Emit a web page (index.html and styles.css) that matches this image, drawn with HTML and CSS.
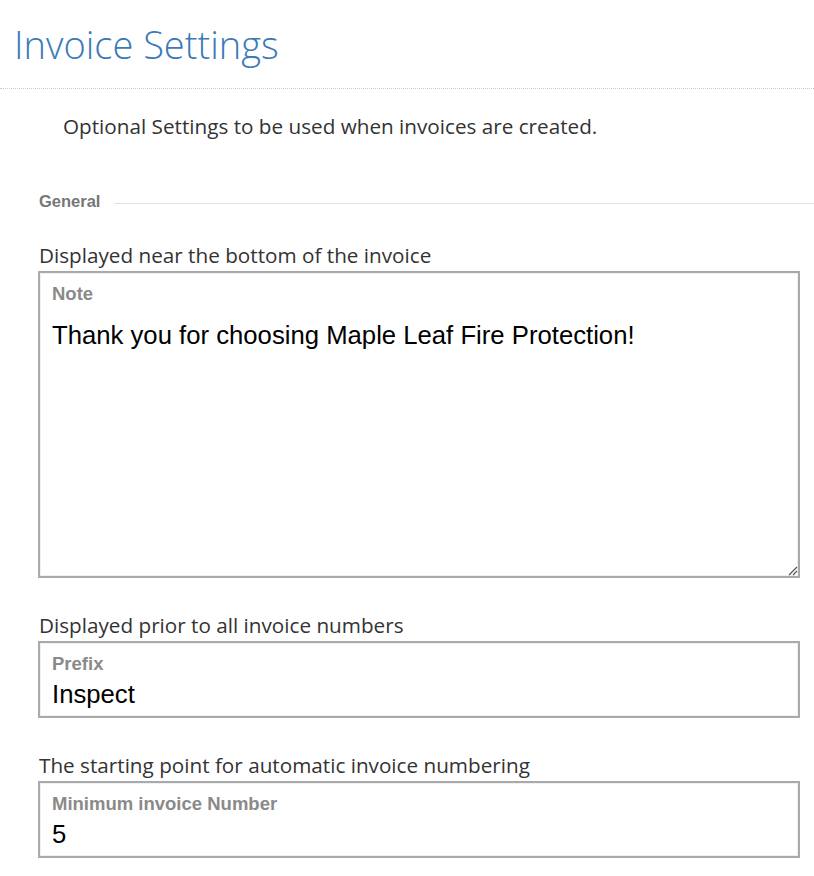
FILE: index.html
```html
<!DOCTYPE html>
<html lang="en">
<head>
<meta charset="utf-8">
<title>Invoice Settings</title>
<link rel="stylesheet" href="styles.css">
</head>
<body>
<header class="page-header">
  <h1 class="page-title">Invoice Settings</h1>
</header>
<p class="intro">Optional Settings to be used when invoices are created.</p>
<section class="group">
  <div class="group-legend"><span class="legend-text">General</span><span class="legend-line"></span></div>

  <div class="field">
    <div class="field-help">Displayed near the bottom of the invoice</div>
    <div class="box box-area">
      <div class="box-label">Note</div>
      <div class="box-value">Thank you for choosing Maple Leaf Fire Protection!</div>
      <svg class="grip" width="12" height="12" viewBox="0 0 12 12"><path d="M11 3 L3 11 M11 7 L7 11" stroke="#555" stroke-width="1.2" fill="none"/></svg>
    </div>
  </div>

  <div class="field">
    <div class="field-help">Displayed prior to all invoice numbers</div>
    <div class="box">
      <div class="box-label">Prefix</div>
      <div class="box-value">Inspect</div>
    </div>
  </div>

  <div class="field">
    <div class="field-help">The starting point for automatic invoice numbering</div>
    <div class="box">
      <div class="box-label">Minimum invoice Number</div>
      <div class="box-value">5</div>
    </div>
  </div>
</section>
</body>
</html>
```
FILE: styles.css
```css
html, body {
  margin: 0;
  padding: 0;
  background: #fff;
}
body {
  width: 814px;
  font-family: "Open Sans", "Liberation Sans", sans-serif;
  color: #333;
}
.page-header {
  padding: 18px 14px 0;
  height: 70px;
  border-bottom: 1px dotted #ccc;
}
.page-title {
  margin: 0;
  font-weight: 300;
  font-size: 38px;
  line-height: 52px;
  color: #3a7ab8;
}
.intro {
  margin: 0;
  padding: 23px 0 0 63px;
  font-size: 20.7px;
  line-height: 28px;
  color: #333;
}
.group {
  padding: 51px 14px 0 38px;
}
.group-legend {
  display: flex;
  align-items: center;
  margin-right: -14px;
  padding-left: 1px;
  height: 20px;
}
.legend-text {
  font-family: "Liberation Sans", Arial, sans-serif;
  font-weight: bold;
  font-size: 16.5px;
  color: #777;
}
.legend-line {
  flex: 1;
  height: 1px;
  background: #e2e2e2;
  margin-left: 14px;
  margin-top: 5px;
}
.field {
  margin-top: 31px;
}
.field + .field {
  margin-top: 34px;
}
.field-help {
  padding-left: 1px;
  font-size: 20.7px;
  line-height: 26px;
  color: #333;
  margin-bottom: 3px;
}
.box {
  position: relative;
  border: 2px solid #aaa;
  box-shadow: inset 0 0 0 1px #f0f0f0;
  padding: 10px 12px 0;
  box-sizing: border-box;
  height: 77px;
}
.box-area {
  height: 307px;
}
.box-label {
  font-family: "Liberation Sans", Arial, sans-serif;
  font-weight: bold;
  font-size: 18.5px;
  line-height: 22px;
  color: #8a8a8a;
}
.box-value {
  font-family: "Liberation Sans", Arial, sans-serif;
  font-size: 25.7px;
  line-height: 34px;
  margin-top: 2px;
  color: #000;
}
.box-area .box-value {
  margin-top: 13px;
}
.grip {
  position: absolute;
  right: 0;
  bottom: 0;
}
```
